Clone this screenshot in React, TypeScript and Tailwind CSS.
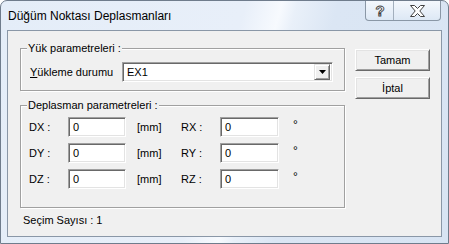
import React from "react";

const ui = "font-['Liberation_Sans',Arial,sans-serif] text-[11px] text-black";

function Sunken({ w, text }: { w: string; text: string }) {
  return (
    <div
      className={`${w} h-[20px] bg-white border border-t-[#a0a0a0] border-l-[#a0a0a0] border-b-white border-r-white shadow-[inset_1px_1px_0_#696969,inset_-1px_-1px_0_#e3e3e3] pl-[4px] flex items-center`}
    >
      {text}
    </div>
  );
}

function Btn({ children }: { children: React.ReactNode }) {
  return (
    <div className="w-[75px] h-[22px] bg-[#f0f0f0] border border-t-white border-l-white border-b-[#696969] border-r-[#696969] shadow-[inset_1px_1px_0_#e3e3e3,inset_-1px_-1px_0_#a0a0a0] flex items-center justify-center">
      {children}
    </div>
  );
}

function Group({ title, className, children }: { title: string; className: string; children: React.ReactNode }) {
  return (
    <div className={`relative border border-[#a0a0a0] shadow-[1px_1px_0_#fff,inset_1px_1px_0_#fff] ${className}`}>
      <span className="absolute left-[6px] top-[-8px] px-[1px] bg-[#f0f0f0] leading-[14px]">{title}</span>
      {children}
    </div>
  );
}

function Row({ d, r }: { d: string; r: string }) {
  return (
    <div className="flex items-center h-[20px]">
      <span className="w-[47px] pl-[8px]">{d} :</span>
      <Sunken w="w-[58px]" text="0" />
      <span className="w-[55px] pl-[11px] self-start mt-[2px]">[mm]</span>
      <span className="w-[39px]">{r} :</span>
      <Sunken w="w-[59px]" text="0" />
      <span className="pl-[14px] self-start mt-[-1px] text-[12px]">°</span>
    </div>
  );
}

export default function App() {
  return (
    <div className={`w-[449px] h-[244px] flex flex-col rounded-t-[7px] border border-[#6f7c8c] bg-[linear-gradient(105deg,#e4edf8_0%,#e8eff9_48%,#f7fafe_55%,#e9f0f9_58%,#dbe6f4_66%,#d8e4f3_100%)] ${ui}`}>
      <div className="h-[29px] flex items-start">
        <span className="flex-1 pl-[7px] pt-[7px] text-[12px] leading-[16px]">Düğüm Noktası Deplasmanları</span>
        <div className="mr-[7px] h-[20px] flex border border-t-0 border-[#8a97a6] rounded-b-[4px] bg-[linear-gradient(#f4f8fd,#dde8f5)] overflow-hidden">
          <div className="w-[28px] flex items-center justify-center border-r border-[#a3afbd]">
            <svg width="12" height="15" viewBox="0 0 12 15">
              <text x="6" y="13" textAnchor="middle" fontSize="15" fontWeight="bold" fontFamily="Liberation Sans, Arial, sans-serif" fill="#fff" stroke="#404040" strokeWidth="0.9">?</text>
            </svg>
          </div>
          <div className="w-[46px] flex items-center justify-center">
            <svg width="15" height="12" viewBox="0 0 15 12">
              <path d="M0.5 0.5H4.5L7.5 3.5L10.5 0.5H14.5L9.8 6L14.5 11.5H10.5L7.5 8.5L4.5 11.5H0.5L5.2 6Z" fill="#fff" stroke="#404040" strokeWidth="1" />
            </svg>
          </div>
        </div>
      </div>
      <div className="flex-1 mx-[6px] mb-[6px] border border-[#8a97a7] bg-[#f0f0f0] flex flex-col">
        <div className="flex">
          <div className="flex flex-col pl-[12px] pt-[17px]">
            <Group title="Yük parametreleri :" className="w-[325px] h-[43px] pt-[13px] pl-[9px]">
              <div className="flex items-center">
                <span className="w-[92px]">
                  <span className="underline">Y</span>ükleme durumu
                </span>
                <div className="w-[211px] h-[20px] bg-white border border-t-[#a0a0a0] border-l-[#a0a0a0] border-b-white border-r-white shadow-[inset_1px_1px_0_#696969,inset_-1px_-1px_0_#e3e3e3] p-[2px] flex items-center">
                  <span className="flex-1 pl-[2px]">EX1</span>
                  <div className="w-[16px] h-[16px] bg-[#f0f0f0] border border-t-[#e3e3e3] border-l-[#e3e3e3] border-b-[#696969] border-r-[#696969] shadow-[inset_1px_1px_0_#fff,inset_-1px_-1px_0_#a0a0a0] flex items-center justify-center">
                    <svg width="7" height="4" viewBox="0 0 7 4">
                      <path d="M0 0H7L3.5 4Z" fill="#000" />
                    </svg>
                  </div>
                </div>
              </div>
            </Group>
            <Group title="Deplasman parametreleri :" className="w-[325px] h-[103px] mt-[14px] pt-[11px] flex flex-col gap-[6px]">
              <Row d="DX" r="RX" />
              <Row d="DY" r="RY" />
              <Row d="DZ" r="RZ" />
            </Group>
          </div>
          <div className="flex flex-col gap-[6px] pl-[10px] pt-[18px]">
            <Btn>Tamam</Btn>
            <Btn>İptal</Btn>
          </div>
        </div>
        <div className="pl-[15px] pt-[4px]">Seçim Sayısı : 1</div>
      </div>
    </div>
  );
}
